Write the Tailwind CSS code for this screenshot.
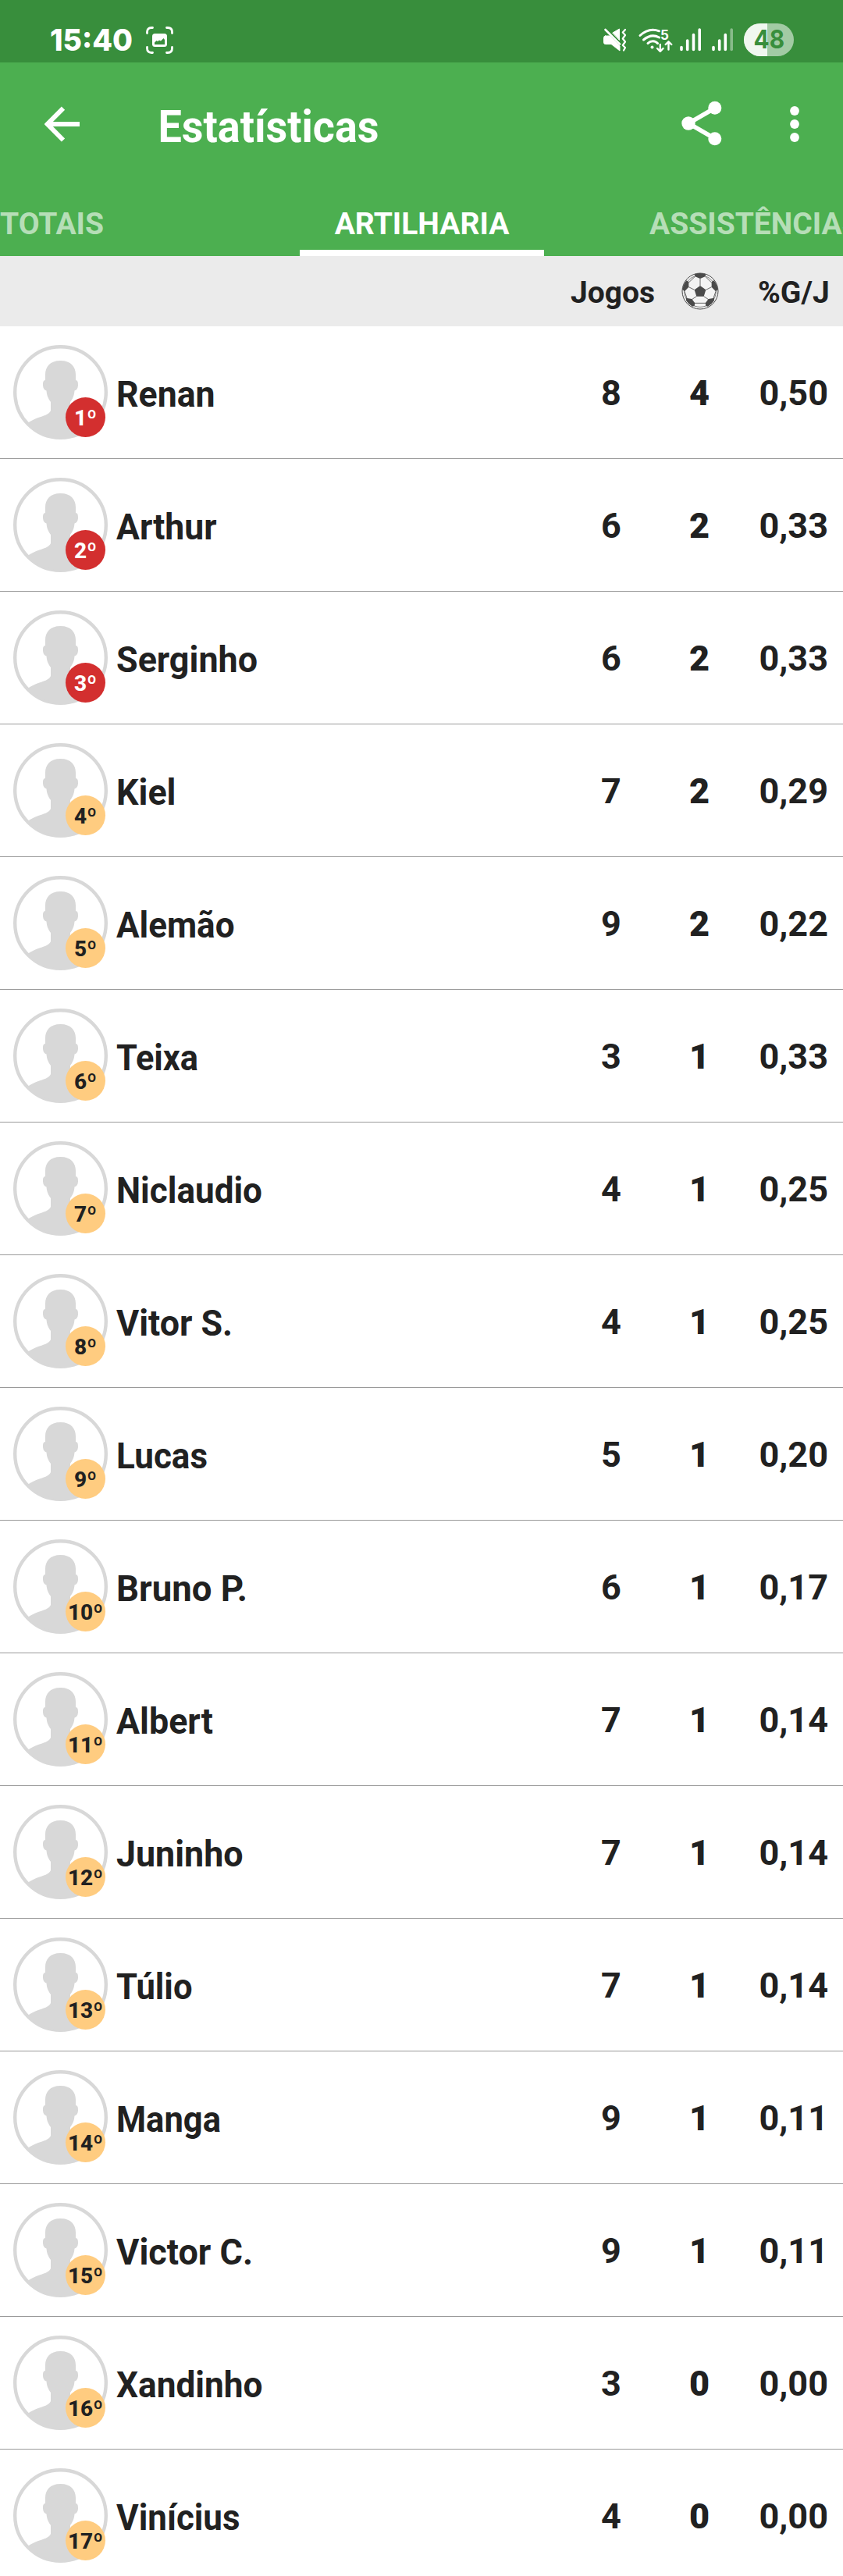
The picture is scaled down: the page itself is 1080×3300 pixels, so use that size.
<!DOCTYPE html>
<html lang="pt-BR">
<head>
<meta charset="utf-8">
<title>Estatísticas</title>
<script src="https://cdn.jsdelivr.net/npm/@tailwindcss/browser@4"></script>
</head>
<body class="h-[3300px] w-[1080px] overflow-hidden bg-white font-['Roboto',sans-serif] text-[#212121]">
<svg class="hidden">
  <symbol id="avatar" viewBox="0 0 121 121">
    <circle cx="60.500" cy="60.500" r="58.300" fill="#fff" stroke="#d8d8d8" stroke-width="4.400"/>
    <path fill="#d8d8d8" d="M60.500 20C47 20 41 28 41 38V45C38 45.500 38 48 38 52C38.500 56 40 58 42.500 58.500C43 65 45 69 48 73V84C46 89 38 91 32 93C27 95 22 97 18.500 100A58.500 58.500 0 0 0 102.500 100C99 97 94 95 89 93C83 91 75 89 73 84V73C76 69 78 65 78.500 58.500C81 58 82.500 56 83 52C83 48 83 45.500 80 45V38C80 28 74 20 60.500 20Z"/>
  </symbol>
</svg>

<header class="text-white">
  <!-- Status bar -->
  <div class="flex h-20 items-start bg-[#388e3c] pr-[63px] pl-16">
    <svg class="h-20 w-[123px] font-['Inter',sans-serif] text-[38.500px] font-extrabold" viewBox="0 0 123 80" fill="#fff">
      <text x="0" y="65" textLength="106" lengthAdjust="spacingAndGlyphs">15:40</text>
    </svg>
    <svg class="mt-[34px] h-[35px] w-[35px]" viewBox="0 0 35 35" fill="none" stroke="#fff" stroke-width="2.800" stroke-linecap="round">
      <path d="M8.500 1.500H7Q1.500 1.500 1.500 7V8.500M26.500 1.500H28Q33.500 1.500 33.500 7V8.500M8.500 33.500H7Q1.500 33.500 1.500 28V26.500M26.500 33.500H28Q33.500 33.500 33.500 28V26.500"/>
      <rect x="8" y="9" width="19" height="17" rx="3.500" fill="#fff" stroke="none"/>
      <path d="M11 23V20.500L13.500 18L15 19L17 17.500L19 18.500L22.500 15L24 17V23Z" fill="#388e3c" stroke="none"/>
    </svg>
    <svg class="ml-auto h-20 w-[245px]" viewBox="772 0 245 80" fill="none" stroke="#fff" stroke-linecap="round" stroke-linejoin="round">
      <!-- Vibrate / muted -->
      <path d="M775.500 38L794 56.500" stroke-width="2.600"/>
      <path d="M775.500 46H781L794 59V65L783 56.500H775.500Q773.500 56.500 773.500 54V48.500Q773.500 46 775.500 46ZM785 42L793.500 37V51Z" fill="#fff" stroke-width="1"/>
      <path d="M801 38L797.800 41.500L801 45L797.800 49.500L801 53.500L797.800 58L801 61L799 64.500" stroke-width="2.200"/>
      <!-- Wi-Fi -->
      <path d="M820 45.500C828 38 837 37 844.500 39.800M824.500 51C831 45.500 838 44.500 844.500 48M830 55.500C834 51.500 839.500 52 842.500 55.500" stroke-width="3"/>
      <circle cx="835.500" cy="60.500" r="2" fill="#fff" stroke="none"/>
      <path d="M845.800 57V65.500M842 62L845.800 65.800L849.600 62M856.500 63.500V53.500M852.700 57L856.500 53.300L860.300 57" stroke-width="2.400"/>
      <text x="846" y="50.500" class="font-['Inter',sans-serif] text-[17px] font-bold" fill="#fff" stroke="none">5</text>
      <!-- Signal bars -->
      <path d="M873 60.500V63.500M880.700 52V63.500M888.500 44.500V63.500M896.200 38V63.500M914 60.500V63.500M921.700 52V63.500M929.300 44.500V63.500" stroke-width="3.600"/>
      <path d="M937.200 38V63.500" stroke-width="3.600" stroke="#88bb8a"/>
      <!-- Battery -->
      <path d="M974 30H996A21 21 0 0 1 996 72H974A21 21 0 0 1 974 30Z" fill="#a2cba4" stroke="none"/>
      <path d="M983 30H974A21 21 0 0 0 974 72H983Z" fill="#f0f7f0" stroke="none"/>
      <text x="965.500" y="61.800" textLength="39.500" lengthAdjust="spacingAndGlyphs" class="font-['Inter',sans-serif] text-[33px] font-bold" fill="#388e3c" stroke="none">48</text>
    </svg>
  </div>

  <!-- App bar -->
  <div class="flex h-[158px] items-center bg-[#4caf50] pr-[50px] pl-[57px]">
    <svg class="h-[46px] w-[46px]" viewBox="57 136 46 46" fill="none" stroke="#fff" stroke-width="6"><path d="M102 159H62M81 138.700L60.800 159L81 179.500"/></svg>
    <svg class="ml-[100px] h-[158px] w-[300px] text-[57px] font-bold" viewBox="203 80 300 158" fill="#fff"><text x="202.500" y="182" textLength="283" lengthAdjust="spacingAndGlyphs">Estatísticas</text></svg>
    <svg class="ml-auto h-[60px] w-[60px]" viewBox="868 129 60 60" fill="#fff"><path d="M915.800 138.500L882 158L915.800 177.500" fill="none" stroke="#fff" stroke-width="5.500"/><circle cx="915.800" cy="138.300" r="8.500"/><circle cx="882" cy="158" r="8.700"/><circle cx="915.800" cy="177.700" r="8.500"/></svg>
    <svg class="ml-[78px] h-[50px] w-6" viewBox="1006 134 24 50" fill="#fff"><circle cx="1018" cy="142" r="5.900"/><circle cx="1018" cy="159" r="5.900"/><circle cx="1018" cy="176" r="5.900"/></svg>
  </div>

  <!-- Tabs -->
  <nav class="flex h-[90px] overflow-hidden bg-[#4caf50] text-[39px] leading-[99px] font-bold whitespace-nowrap">
    <div class="w-[384px] shrink-0 text-white/60">TOTAIS</div>
    <div class="w-[313px] shrink-0 border-b-8 border-white text-center">ARTILHARIA</div>
    <div class="shrink-0 pl-[135px] text-white/60">ASSISTÊNCIAS</div>
  </nav>
</header>

<div class="flex h-[90px] items-center bg-[#ebebeb] text-[39px] leading-none font-bold">
  <div class="ml-[731px] w-[109px] pt-[5px]">Jogos</div>
  <svg class="ml-[33px] h-12 w-12" viewBox="38 117 144 144" fill="none" stroke="#4a4a4a" stroke-width="3">
    <circle cx="110" cy="189" r="69" fill="#f3f3f3"/>
    <circle cx="110" cy="189" r="61" stroke-width="2"/>
    <path fill="#4a4a4a" stroke="none" d="M110 168L132 184L124 209H96L88 184ZM90 123Q110 117 130 123L131 132L110 141L89 132ZM42 183Q44 165 57 148L66 153L66 173L50 190ZM178 183Q176 165 163 148L154 153L154 173L170 190ZM56 215L78 219L90 235L88 246L80 248Q64 238 56 225ZM164 215L142 219L130 235L132 246L140 248Q156 238 164 225Z"/>
    <path d="M110 141V168M88 184L66 173M132 184L154 173M96 209L78 221M124 209L142 221M66 156L89 134M154 156L131 134M50 190L59 216M170 190L161 216M89 235H131" stroke-width="2.500"/>
  </svg>
  <div class="ml-[50px] pt-[5px]">%G/J</div>
</div>

<main id="ranking"></main>

<script>
  // name, name width, games, goals, goals per game
  const players = [
    ['Renan', 126.5, 8, 4, '0,50'], ['Arthur', 128.5, 6, 2, '0,33'], ['Serginho', 181, 6, 2, '0,33'],
    ['Kiel', 76.5, 7, 2, '0,29'], ['Alemão', 151.5, 9, 2, '0,22'], ['Teixa', 105, 3, 1, '0,33'],
    ['Niclaudio', 187, 4, 1, '0,25'], ['Vitor S.', 149, 4, 1, '0,25'], ['Lucas', 117, 5, 1, '0,20'],
    ['Bruno P.', 168, 6, 1, '0,17'], ['Albert', 124, 7, 1, '0,14'], ['Juninho', 162.5, 7, 1, '0,14'],
    ['Túlio', 97.5, 7, 1, '0,14'], ['Manga', 134, 9, 1, '0,11'], ['Victor C.', 175, 9, 1, '0,11'],
    ['Xandinho', 187.5, 3, 0, '0,00'], ['Vinícius', 158.5, 4, 0, '0,00'],
  ];
  document.getElementById('ranking').innerHTML = players.map(([name, width, games, goals, avg], i) => `
    <div class="flex h-[170px] items-center border-b border-[#9a9a9a] text-[45px] leading-none font-bold">
      <div class="relative ml-[17px] h-[121px] w-[121px]">
        <svg class="h-full w-full"><use href="#avatar"/></svg>
        <div class="absolute top-[67px] left-[67px] flex h-[51px] w-[51px] items-center justify-center rounded-full pt-[3px] text-[28px] font-extrabold ${i < 3 ? 'bg-[#d32f2f] text-white' : 'bg-[#ffcc80]'}">${i + 1}º</div>
      </div>
      <svg class="ml-[11px] h-[120px] w-[571px] text-[46px] font-bold" fill="#212121"><text x="0" y="78" textLength="${width}" lengthAdjust="spacingAndGlyphs">${name}</text></svg>
      <div class="w-[126px] pt-px text-center">${games}</div>
      <div class="w-[100px] pt-px text-center font-black">${goals}</div>
      <div class="w-[115px] pt-px text-right">${avg}</div>
    </div>`).join('');
</script>
</body>
</html>
